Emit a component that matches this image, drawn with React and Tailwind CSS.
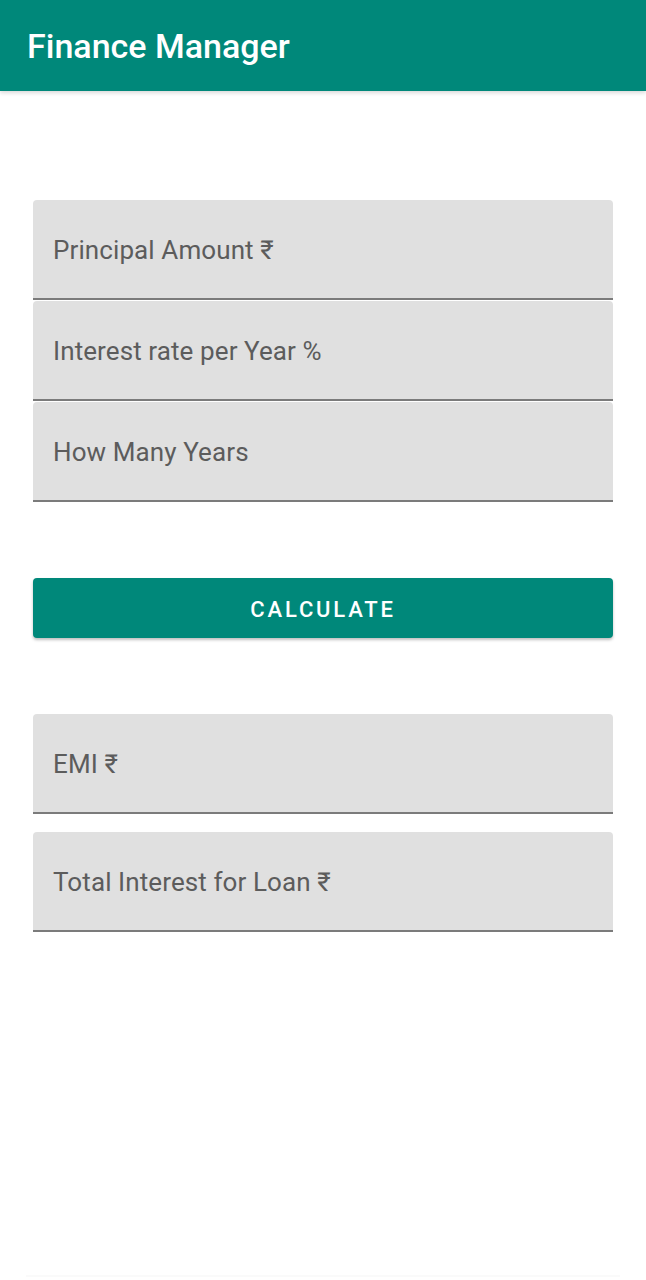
import React from 'react';

const Field = ({ label, className = '' }) => (
    <div className={`h-[100px] bg-[#e0e0e0] rounded-t-[4px] border-b-2 border-[#7b7b7b] flex items-center px-5 ${className}`}>
        <span className="text-[26px] text-[#5c5c5c] leading-none pt-[2px] tracking-[0.1px]">{label}</span>
    </div>
);

export default function App() {
    return (
        <div className="w-[646px] h-[1280px] bg-white flex flex-col" style={{ fontFamily: 'Roboto, "Noto Sans", sans-serif' }}>
            {/* App bar */}
            <div className="h-[91px] bg-[#00887a] flex items-center px-[27px] shadow-[0_2px_4px_rgba(0,0,0,0.15)]">
                <h1 className="text-white text-[34px] font-medium pt-[2px]">Finance Manager</h1>
            </div>

            <div className="flex flex-col px-[33px] pt-[109px]">
                {/* Inputs */}
                <div className="flex flex-col gap-px">
                    <Field label="Principal Amount ₹" />
                    <Field label="Interest rate per Year %" />
                    <Field label="How Many Years" />
                </div>

                <button className="mt-[76px] h-[60px] w-full bg-[#00887a] rounded-[4px] shadow-[0_2px_3px_rgba(0,0,0,0.25)] text-white text-[22px] font-medium tracking-[2.8px] uppercase pt-[2px]">
                    Calculate
                </button>

                <div className="flex flex-col gap-[18px] mt-[76px]">
                    <Field label="EMI ₹" />
                    <Field label="Total Interest for Loan ₹" />
                </div>
            </div>

            <div className="flex-1" />
            <div className="mx-[26px] h-[2px] bg-[#fafafa] mb-[3px]" />
        </div>
    );
}
